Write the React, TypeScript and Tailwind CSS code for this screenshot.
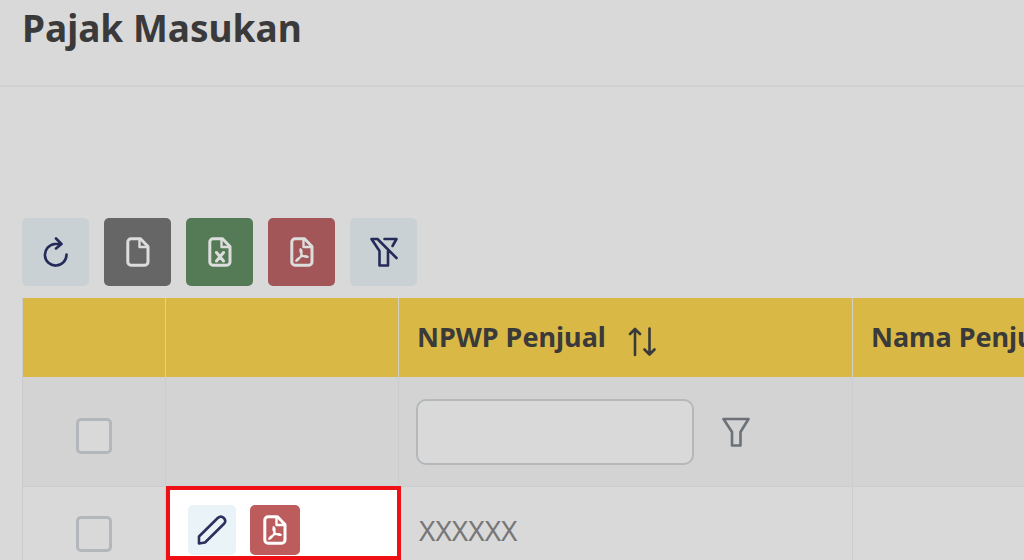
import React from 'react';
import clsx from 'clsx';

interface IconProps {
  className?: string;
}

const RefreshIcon: React.FC<IconProps> = ({ className }) => (
  <svg viewBox="0 0 28 32" className={className} fill="none" stroke="currentColor" strokeWidth="2.6" strokeLinecap="round" strokeLinejoin="round" aria-hidden="true">
    <path d="M12 8h7M13 8A10.800 10.800 0 1 0 24.500 18.500M14 2.500l5.500 5.500-5.500 4.500" />
  </svg>
);

const FileIcon: React.FC<IconProps & { children?: React.ReactNode }> = ({ className, children }) => (
  <svg viewBox="0 0 24 30" className={className} fill="none" stroke="currentColor" strokeWidth="3" strokeLinejoin="round" strokeLinecap="round" aria-hidden="true">
    <path d="M5 1.800h9.500L22 9.500v15.500a3.200 3.200 0 0 1-3.200 3.200H5A3.200 3.200 0 0 1 1.800 25V5A3.200 3.200 0 0 1 5 1.800z" />
    <path d="M13.500 2.500V10h8" strokeWidth="2.400" />
    {children}
  </svg>
);

const ExcelIcon: React.FC<IconProps> = ({ className }) => (
  <FileIcon className={className}>
    <path d="M8.500 15.500l7 8.500M15.500 15.500l-7 8.500" strokeWidth="3" />
  </FileIcon>
);

const PdfIcon: React.FC<IconProps> = ({ className }) => (
  <FileIcon className={className}>
    <path d="M10.500 12c-.8 2.500.3 4.800 2.200 6.600 1.500 1.400 3.500 1.800 5.300 1.200-1.800-1.600-5-.8-7.500.2-2.200.9-4 2.300-4.500 4 2.500-.6 4.600-4 5.500-7.300.5-1.800.2-3.900-1-4.700z" strokeWidth="1.800" />
  </FileIcon>
);

const FilterIcon: React.FC<IconProps> = ({ className }) => (
  <svg viewBox="0 0 28 30" className={className} fill="none" stroke="currentColor" strokeWidth="2.6" strokeLinejoin="round" aria-hidden="true">
    <path d="M1.500 2h25L18.500 15v13.500h-8.500V15z" />
  </svg>
);

const FilterSlashIcon: React.FC<IconProps> = ({ className }) => (
  <svg viewBox="0 0 28 30" className={className} fill="none" stroke="currentColor" strokeWidth="2.6" strokeLinejoin="round" strokeLinecap="round" aria-hidden="true">
    <path d="M26.500 21L7.500 2H1.500L9.500 14V28.500h8.500V14M14.500 2h12l-4 7" />
  </svg>
);

const SortIcon: React.FC<IconProps> = ({ className }) => (
  <svg viewBox="0 0 28 30" className={className} fill="none" stroke="currentColor" strokeWidth="2.6" strokeLinejoin="round" strokeLinecap="round" aria-hidden="true">
    <path d="M7 28V2M2 7l5-5 5 5M21.500 1.500v26M16.500 22.500l5 5 5-5" />
  </svg>
);

const PencilIcon: React.FC<IconProps> = ({ className }) => (
  <svg viewBox="0 0 30 30" className={className} fill="none" stroke="currentColor" strokeWidth="2.6" strokeLinejoin="round" aria-hidden="true">
    <path d="M2 21.500L21 2.800c1.800-1.600 4.200-1.400 5.800.2s1.800 4 .2 5.800L8 27.500l-6 1z" />
  </svg>
);

const toolbar = [
  { label: 'Refresh', color: 'bg-[#c9d1d4] text-[#252b59]', icon: <RefreshIcon className="h-8 w-7" /> },
  { label: 'CSV', color: 'bg-[#666666] text-[#dddddd]', icon: <FileIcon className="h-[30px] w-6" /> },
  { label: 'Excel', color: 'bg-[#547b56] text-[#dddddd]', icon: <ExcelIcon className="h-[30px] w-6" /> },
  { label: 'PDF', color: 'bg-[#a25657] text-[#dddddd]', icon: <PdfIcon className="h-[30px] w-6" /> },
  { label: 'Hapus filter', color: 'bg-[#c9d1d4] text-[#252b59]', icon: <FilterSlashIcon className="h-[30px] w-7" /> },
];

const Checkbox: React.FC<{ label: string }> = ({ label }) => (
  <input
    type="checkbox"
    aria-label={label}
    className="block mx-auto size-9 appearance-none rounded-[5px] border-3 border-[#b3b7bb] bg-[#d9d9d9]"
  />
);

const th = 'border-r border-[#d3d1c4] px-[18px] text-left font-bold';
const td = 'border-r border-b border-[#cbcccd] px-[17px]';

export default function App() {
  return (
    <div className="min-h-screen overflow-hidden bg-[#d9d9d9] font-['Noto_Sans','Open_Sans',sans-serif] text-[#3a3a3a]">
      <header className="border-b-2 border-[#d0d1d2] px-[22px] pb-[30px]">
        <h1 className="text-[37px] leading-[55px] font-bold">Pajak Masukan</h1>
      </header>

      <main className="pt-[131px] pl-[22px]">
        <div className="flex gap-[15px]">
          {toolbar.map((item) => (
            <button
              key={item.label}
              type="button"
              aria-label={item.label}
              className={clsx('flex h-[68px] w-[67px] items-center justify-center rounded-[5px]', item.color)}
            >
              {item.icon}
            </button>
          ))}
        </div>

        <table className="mt-3 w-[1260px] table-fixed border-separate border-spacing-0 border-l border-[#cbcccd]">
          <colgroup>
            <col className="w-[143px]" />
            <col className="w-[233px]" />
            <col className="w-[454px]" />
            <col />
          </colgroup>
          <thead>
            <tr className="h-[79px] bg-[#d9b846] text-[27px]">
              <th className={th} />
              <th className={th} />
              <th className={th}>
                <div className="flex items-center gap-[22px]">
                  NPWP Penjual
                  <button type="button" aria-label="Urutkan" className="pt-2">
                    <SortIcon className="h-[30px] w-7" />
                  </button>
                </div>
              </th>
              <th className={th}>Nama Penjual</th>
            </tr>
          </thead>
          <tbody>
            <tr className="h-[110px] bg-[#d3d3d3]">
              <td className={clsx(td, 'pt-2')}><Checkbox label="Pilih semua" /></td>
              <td className={td} />
              <td className={td}>
                <div className="flex items-center gap-7">
                  <input
                    type="text"
                    aria-label="Filter NPWP Penjual"
                    className="h-[66px] w-[278px] rounded-[10px] border-2 border-[#b5b8bb] bg-[#d9d9d9] px-4 text-2xl"
                  />
                  <button type="button" aria-label="Filter" className="text-[#6b7177]">
                    <FilterIcon className="h-[30px] w-7" />
                  </button>
                </div>
              </td>
              <td className={td} />
            </tr>
            <tr className="h-[73px] align-top">
              <td className={clsx(td, 'border-b-0 pt-[29px]')}><Checkbox label="Pilih baris" /></td>
              <td className="relative p-0">
                {/* highlighted cell actions */}
                <div className="absolute -top-px left-0 flex h-[74px] w-[235px] gap-[14px] border-4 border-[#ee1015] bg-white pt-[15px] pl-[18px]">
                  <button type="button" aria-label="Ubah" className="flex h-[50px] w-12 items-center justify-center rounded-[5px] bg-[#eaf3f7] text-[#2b315f]">
                    <PencilIcon className="size-[30px]" />
                  </button>
                  <button type="button" aria-label="Unduh PDF" className="flex h-[50px] w-[50px] items-center justify-center rounded-[5px] bg-[#bc5c5d] text-white">
                    <PdfIcon className="h-[30px] w-6" />
                  </button>
                </div>
              </td>
              <td className={clsx(td, 'border-b-0 pt-[22px] pl-5 text-[28px] leading-[42px] text-[#777777]')}>XXXXXX</td>
              <td className={clsx(td, 'border-b-0')} />
            </tr>
          </tbody>
        </table>
      </main>
    </div>
  );
}
